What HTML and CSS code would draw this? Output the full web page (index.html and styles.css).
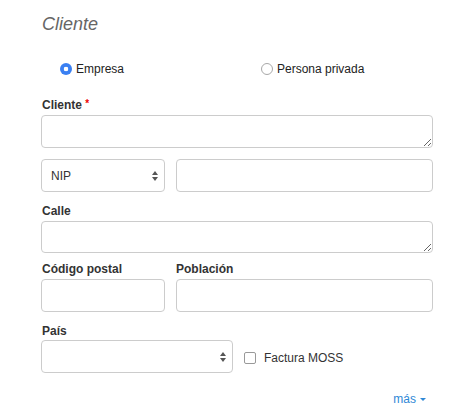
FILE: index.html
```html
<!DOCTYPE html>
<html>
<head>
<meta charset="utf-8">
<link rel="stylesheet" href="styles.css">
</head>
<body>
<div class="form">
  <h2 class="title">Cliente</h2>
  <div class="options">
    <label class="opt first"><span class="radio checked"></span>Empresa</label>
    <label class="opt"><span class="radio"></span>Persona privada</label>
  </div>

  <div class="label lbl-cliente">Cliente <span class="req">*</span></div>
  <textarea class="area a1"></textarea>

  <div class="row r-nip">
    <div class="select sel-nip"><span class="val">NIP</span>
      <svg class="arrows" width="6" height="10" viewBox="0 0 6 10"><path d="M3 0L6 4H0Z M3 10L6 6H0Z" fill="#555"/></svg>
    </div>
    <input class="input grow" type="text">
  </div>

  <div class="label lbl-calle">Calle</div>
  <textarea class="area a2"></textarea>

  <div class="row r-labels">
    <div class="label col-small">Código postal</div>
    <div class="label">Población</div>
  </div>
  <div class="row r-cp">
    <input class="input small" type="text">
    <input class="input grow" type="text">
  </div>

  <div class="label lbl-pais">País</div>
  <div class="row r-pais">
    <div class="select sel-pais">
      <svg class="arrows" width="6" height="10" viewBox="0 0 6 10"><path d="M3 0L6 4H0Z M3 10L6 6H0Z" fill="#555"/></svg>
    </div>
    <label class="check"><span class="box"></span>Factura MOSS</label>
  </div>

  <div class="more"><a class="link">más<span class="caret"></span></a></div>
</div>
</body>
</html>
```
FILE: styles.css
```css
* { box-sizing: border-box; }
body {
  margin: 0;
  background: #fff;
  font-family: "Liberation Sans", Arial, sans-serif;
  font-size: 12px;
  color: #333;
}
.form {
  width: 433px;
  padding-left: 41px;
  padding-top: 14px;
}
.title {
  margin: 0;
  font-size: 18px;
  line-height: 20px;
  font-weight: normal;
  font-style: italic;
  color: #666;
  padding-left: 1px;
}
.options {
  display: grid;
  grid-template-columns: 220px 1fr;
  margin-top: 27px;
  height: 17px;
}
.opt {
  display: flex;
  align-items: center;
  gap: 4px;
  line-height: 17px;
  color: #222;
}
.opt.first { padding-left: 19px; }
.radio {
  width: 12px;
  height: 12px;
  border-radius: 50%;
  border: 1px solid #a8a8a8;
  background: #fff;
  position: relative;
  top: -1px;
}
.radio.checked {
  border: none;
  background: radial-gradient(circle, #fff 0 2px, #3a80f2 2.6px);
}
.label {
  font-weight: bold;
  line-height: 17px;
  color: #333;
  padding-left: 1px;
}
.req { color: #e00; font-size: 10px; vertical-align: 2px; }
.lbl-cliente { margin-top: 17px; }
.area {
  display: block;
  width: 392px;
  border: 1px solid #ccc;
  border-radius: 4px;
  margin: 1px 0 0;
  padding: 6px 8px;
  resize: vertical;
  font: inherit;
}
.a1 { height: 33px; }
.a2 { height: 32px; }
.row {
  display: flex;
  gap: 11px;
  width: 392px;
}
.r-nip { margin-top: 11px; }
.select {
  position: relative;
  height: 33px;
  border: 1px solid #ccc;
  border-radius: 4px;
  display: flex;
  align-items: center;
  padding-left: 9px;
  color: #333;
}
.sel-nip { width: 124px; flex: none; }
.sel-pais { width: 192px; flex: none; }
.arrows {
  position: absolute;
  right: 6px;
  top: 50%;
  margin-top: -5px;
}
.input {
  height: 33px;
  border: 1px solid #ccc;
  border-radius: 4px;
  margin: 0;
  padding: 6px 8px;
  font: inherit;
}
.input.small { width: 124px; flex: none; }
.input.grow { flex: 1; min-width: 0; }
.lbl-calle { margin-top: 11px; }
.r-labels { margin-top: 8px; }
.col-small { width: 124px; flex: none; padding-left: 1px; }
.r-labels .label + .label { padding-left: 0; }
.r-cp { margin-top: 1px; }
.lbl-pais { margin-top: 11px; }
.r-pais { margin-top: 0; align-items: center; }
.check {
  display: flex;
  align-items: center;
  gap: 8px;
  color: #333;
  margin-left: 0;
  position: relative;
  top: 1px;
}
.box {
  width: 12px;
  height: 12px;
  border: 1px solid #999;
  border-radius: 2px;
  background: #fff;
}
.more {
  margin-top: 18px;
  display: flex;
  justify-content: flex-end;
  padding-right: 7px;
  line-height: 17px;
}
.link {
  color: #2f88d6;
  display: flex;
  align-items: center;
  gap: 4px;
}
.caret {
  width: 0;
  height: 0;
  border-left: 3px solid transparent;
  border-right: 3px solid transparent;
  border-top: 3px solid #2f88d6;
}
```
